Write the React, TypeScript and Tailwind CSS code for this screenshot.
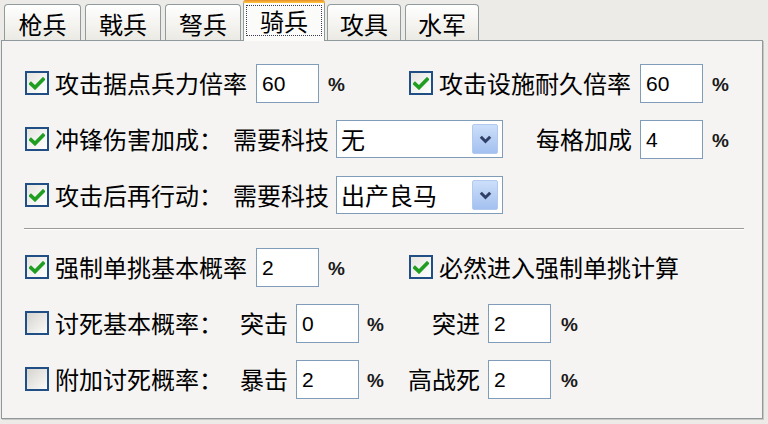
import React from "react";

function Check({ checked }: { checked: boolean }) {
  return (
    <div
      className={
        checked
          ? "w-[24px] h-[24px] shrink-0 border-2 border-[#1f4f85] bg-linear-to-br from-[#e6e5df] to-white flex items-center justify-center"
          : "w-[24px] h-[24px] shrink-0 border-2 border-[#1f4f85] bg-linear-to-br from-[#d6d4ce] to-[#fbfbf9] flex items-center justify-center"
      }
    >
      {checked && (
        <svg width="16" height="13" viewBox="0 0 16 13" className="mt-[1px]">
          <path d="M2 6.8 L6 10.6 L14 2.4" stroke="#1f9e22" strokeWidth="3.6" fill="none" strokeLinecap="square" />
        </svg>
      )}
    </div>
  );
}

function Field({ v, cls }: { v: string; cls: string }) {
  return (
    <div
      className={
        "w-[63px] h-[39px] shrink-0 border border-[#7f9db9] bg-white flex items-center pl-[5px] font-['Liberation_Sans',sans-serif] text-[21px] leading-none text-black " +
        cls
      }
    >
      {v}
    </div>
  );
}

function Pct({ cls }: { cls: string }) {
  return (
    <span className={"font-['Liberation_Sans',sans-serif] text-[19px] font-bold leading-none text-[#1a1a1a] pt-[2px] " + cls}>
      %
    </span>
  );
}

function Select({ v }: { v: string }) {
  return (
    <div className="ml-[7px] w-[167px] h-[38px] shrink-0 border border-[#7f9db9] bg-white flex items-center pl-[4px] pr-[4px]">
      <span className="flex-1 text-[24px] leading-none whitespace-nowrap">{v}</span>
      <div className="w-[26px] h-[30px] rounded-[2px] bg-linear-to-b from-[#cddffa] to-[#a3c0ef] border border-[#b3c9f0] flex items-center justify-center">
        <svg width="13" height="9" viewBox="0 0 13 9">
          <path d="M1.8 1.8 L6.5 6.5 L11.2 1.8" stroke="#2f3f66" strokeWidth="3" fill="none" />
        </svg>
      </div>
    </div>
  );
}

function Tab({ label, w, ml }: { label: string; w: string; ml: string }) {
  return (
    <div
      className={
        "h-[36px] mb-[1px] shrink-0 rounded-t-[4px] border border-b-0 border-[#919b9c] bg-linear-to-b from-white to-[#ebeae4] flex items-center justify-center pt-[3px] text-[24px] leading-none " +
        w +
        " " +
        ml
      }
    >
      {label}
    </div>
  );
}

export default function App() {
  return (
    <div className="w-[768px] h-[424px] bg-[#ecebe8] overflow-hidden font-['Noto_Sans_CJK_SC',sans-serif] text-black">
      {/* tabs */}
      <div className="h-[41px] flex items-end">
        <Tab label="枪兵" w="w-[77px]" ml="ml-[4px]" />
        <Tab label="戟兵" w="w-[76px]" ml="ml-[4px]" />
        <Tab label="弩兵" w="w-[76px]" ml="ml-[4px]" />
        <div className="relative z-10 ml-[2px] w-[82px] h-[41px] shrink-0 rounded-t-[4px] border-x border-[#919b9c] bg-[#fbfbfa] flex flex-col">
          <div className="h-[3px] rounded-t-[3px] bg-linear-to-b from-[#e68b2c] to-[#ffc73c] -mx-[1px]" />
          <div className="mt-[2px] mx-[2px] h-[31px] border border-dotted border-[#3a3a50] flex items-center justify-center text-[24px] leading-none">
            骑兵
          </div>
        </div>
        <Tab label="攻具" w="w-[74px]" ml="ml-[2px]" />
        <Tab label="水军" w="w-[74px]" ml="ml-[4px]" />
      </div>

      {/* panel */}
      <div className="-mt-[1px] ml-[1px] w-[762px] h-[379px] border border-[#8f999b] bg-[#f5f4f2] shadow-[1px_1px_0_#c8c7c1] pt-[14px] pl-[23px] text-[24px] leading-none whitespace-nowrap">
        {/* row 1 */}
        <div className="h-[56px] flex items-center">
          <div className="w-[384px] flex items-center">
            <Check checked />
            <span className="ml-[6px] w-[192px]">攻击据点兵力倍率</span>
            <Field v="60" cls="ml-[9px]" />
            <Pct cls="ml-[9px]" />
          </div>
          <Check checked />
          <span className="ml-[6px] w-[192px]">攻击设施耐久倍率</span>
          <Field v="60" cls="ml-[9px]" />
          <Pct cls="ml-[9px]" />
        </div>

        {/* row 2 */}
        <div className="h-[56px] flex items-center">
          <Check checked />
          <span className="ml-[6px] w-[168px]">冲锋伤害加成：</span>
          <span className="ml-[10px] w-[96px]">需要科技</span>
          <Select v="无" />
          <span className="ml-[33px] w-[96px]">每格加成</span>
          <Field v="4" cls="ml-[8px]" />
          <Pct cls="ml-[9px]" />
        </div>

        {/* row 3 */}
        <div className="h-[56px] flex items-center">
          <Check checked />
          <span className="ml-[6px] w-[168px]">攻击后再行动：</span>
          <span className="ml-[10px] w-[96px]">需要科技</span>
          <Select v="出产良马" />
        </div>

        {/* separator */}
        <div className="mt-[5px] -ml-[1px] w-[720px] h-[1px] bg-[#9a9a9a]" />
        <div className="-ml-[1px] w-[720px] h-[1px] bg-white" />

        {/* row 4 */}
        <div className="mt-[9px] h-[56px] flex items-center">
          <div className="w-[384px] flex items-center">
            <Check checked />
            <span className="ml-[6px] w-[192px]">强制单挑基本概率</span>
            <Field v="2" cls="ml-[9px]" />
            <Pct cls="ml-[9px]" />
          </div>
          <Check checked />
          <span className="ml-[6px]">必然进入强制单挑计算</span>
        </div>

        {/* row 5 */}
        <div className="h-[56px] flex items-center">
          <div className="w-[215px] flex items-center">
            <Check checked={false} />
            <span className="ml-[6px]">讨死基本概率：</span>
          </div>
          <span className="w-[48px]">突击</span>
          <Field v="0" cls="ml-[8px]" />
          <Pct cls="ml-[8px] w-[41px]" />
          <span className="w-[72px] text-right">突进</span>
          <Field v="2" cls="ml-[8px]" />
          <Pct cls="ml-[10px]" />
        </div>

        {/* row 6 */}
        <div className="h-[56px] flex items-center">
          <div className="w-[215px] flex items-center">
            <Check checked={false} />
            <span className="ml-[6px]">附加讨死概率：</span>
          </div>
          <span className="w-[48px]">暴击</span>
          <Field v="2" cls="ml-[8px]" />
          <Pct cls="ml-[8px] w-[41px]" />
          <span className="w-[72px] text-right">高战死</span>
          <Field v="2" cls="ml-[8px]" />
          <Pct cls="ml-[10px]" />
        </div>
      </div>
    </div>
  );
}
